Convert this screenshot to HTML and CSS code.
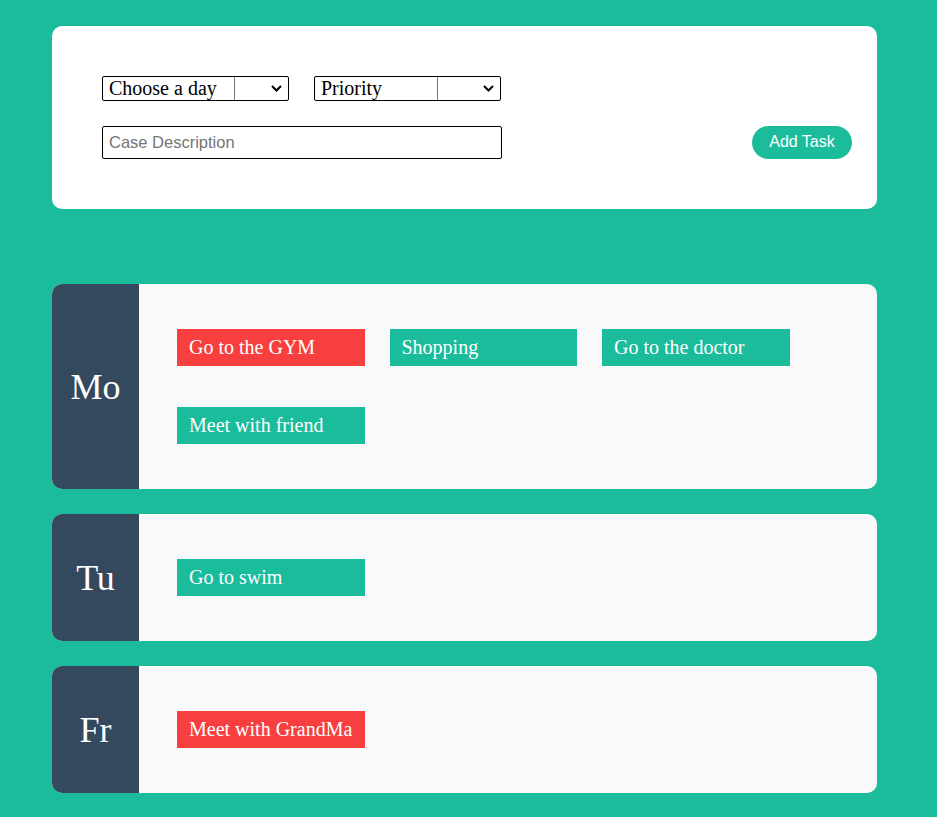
FILE: index.html
```html
<!DOCTYPE html>
<html>
<head>
<meta charset="utf-8">
<link rel="stylesheet" href="styles.css">
</head>
<body>
<div class="wrap">
  <form class="form-card">
    <div class="row selects">
      <div class="pick pick-day">
        <span class="pick-label">Choose a day</span>
        <span class="pick-dd"><svg width="11" height="7" viewBox="0 0 11 7"><path d="M1 1l4.5 4.5L10 1" fill="none" stroke="#000" stroke-width="2"/></svg></span>
      </div>
      <div class="pick pick-prio">
        <span class="pick-label">Priority</span>
        <span class="pick-dd"><svg width="11" height="7" viewBox="0 0 11 7"><path d="M1 1l4.5 4.5L10 1" fill="none" stroke="#000" stroke-width="2"/></svg></span>
      </div>
    </div>
    <div class="row second">
      <input class="desc" type="text" placeholder="Case Description">
      <button class="add" type="button">Add Task</button>
    </div>
  </form>

  <div class="days">
    <section class="day">
      <div class="day-name">Mo</div>
      <div class="tasks">
        <div class="task high">Go to the GYM</div>
        <div class="task">Shopping</div>
        <div class="task">Go to the doctor</div>
        <div class="task">Meet with friend</div>
      </div>
    </section>
    <section class="day">
      <div class="day-name">Tu</div>
      <div class="tasks">
        <div class="task">Go to swim</div>
      </div>
    </section>
    <section class="day">
      <div class="day-name">Fr</div>
      <div class="tasks">
        <div class="task high">Meet with GrandMa</div>
      </div>
    </section>
  </div>
</div>
</body>
</html>
```

FILE: styles.css
```css
* { box-sizing: border-box; }
html, body { margin: 0; padding: 0; }
body {
  background: #1abc9c;
  font-family: "Liberation Serif", "Times New Roman", serif;
}
.wrap {
  width: 825px;
  margin: 0 0 0 52px;
  padding-top: 26px;
}
.form-card {
  background: #fff;
  border-radius: 10px;
  padding: 50px 25px 50px 50px;
  display: flex;
  flex-direction: column;
  gap: 25px;
  margin: 0;
}
.row { display: flex; align-items: center; }
.selects { gap: 25px; }
.pick {
  width: 187px;
  height: 25px;
  border: 1px solid #000;
  border-radius: 2px;
  display: flex;
  align-items: stretch;
  font-size: 20px;
  color: #000;
  background: #fff;
}
.pick-label {
  flex: 1;
  padding-left: 6px;
  line-height: 22px;
  white-space: nowrap;
}
.pick-dd {
  border-left: 1px solid #767676;
  display: flex;
  align-items: center;
  justify-content: flex-end;
  padding-right: 6px;
}
.pick-day .pick-dd { width: 54px; }
.pick-prio .pick-dd { width: 63px; }
.second { justify-content: space-between; }
.desc {
  width: 400px;
  height: 33px;
  border: 1px solid #000;
  border-radius: 2px;
  padding: 0 6px;
  font-family: "Liberation Sans", Arial, sans-serif;
  font-size: 16.5px;
  outline: none;
}
.desc::placeholder { color: #757575; }
.add {
  height: 33px;
  width: 100px;
  border: none;
  border-radius: 17px;
  background: #1abc9c;
  color: #fff;
  font-family: "Liberation Sans", Arial, sans-serif;
  font-size: 16px;
  padding: 0 0 2px;
}
.days {
  margin-top: 75px;
  display: flex;
  flex-direction: column;
  gap: 25px;
}
.day {
  display: flex;
  border-radius: 10px;
  overflow: hidden;
  background: #f9f9f9;
}
.day-name {
  width: 87px;
  flex: none;
  background: #34495e;
  color: #fff;
  font-size: 36px;
  display: flex;
  align-items: center;
  justify-content: center;
}
.tasks {
  flex: 1;
  padding: 45px 38px;
  display: grid;
  grid-template-columns: repeat(3, 187.5px);
  column-gap: 25px;
  row-gap: 41px;
}
.task {
  height: 37px;
  background: #1abc9c;
  color: #fff;
  font-size: 20px;
  line-height: 37px;
  padding-left: 12px;
  white-space: nowrap;
}
.task.high { background: #f73f3f; }
```
